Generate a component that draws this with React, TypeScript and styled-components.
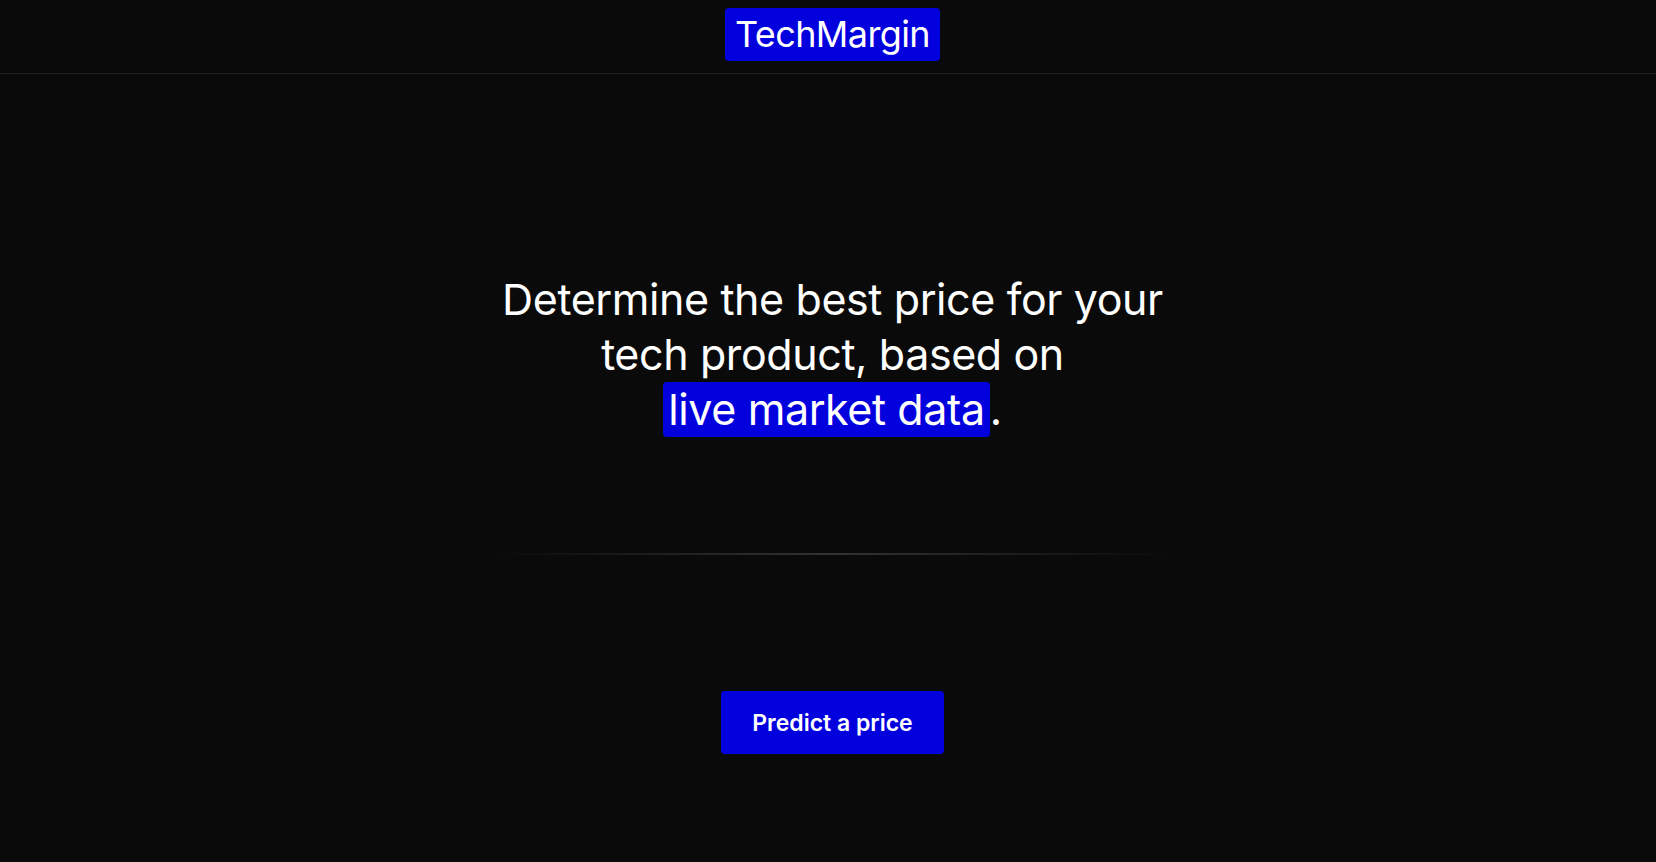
import styled, { createGlobalStyle } from 'styled-components';

const GlobalStyle = createGlobalStyle`
  * { box-sizing: border-box; }
  html, body {
    margin: 0;
    padding: 0;
    background: #0a0a0a;
    color: #ffffff;
    font-family: Inter, "Liberation Sans", sans-serif;
  }
`

const Page = styled.div`
  min-height: 862px;
  display: flex;
  flex-direction: column;
  background: #0a0a0a;
  padding-left: 9px;
`

const Header = styled.header`
  height: 74px;
  display: flex;
  justify-content: center;
  align-items: flex-start;
  padding-top: 8px;
  border-bottom: 1px solid #232323;
  margin-left: -9px;
  padding-left: 9px;
`

const Logo = styled.a`
  display: inline-block;
  background: #0300de;
  color: #ffffff;
  font-size: 36px;
  line-height: 53px;
  height: 53px;
  padding: 0 10px;
  border-radius: 4px;
  text-decoration: none;
  letter-spacing: -0.6px;
`

const Main = styled.main`
  display: flex;
  flex-direction: column;
  align-items: center;
  padding-top: 198px;
`

const Headline = styled.h1`
  margin: 0;
  font-weight: 400;
  font-size: 43px;
  line-height: 55px;
  text-align: center;
  max-width: 700px;
  letter-spacing: -0.4px;
`

const Highlight = styled.span`
  background: #0300de;
  border-radius: 4px;
  padding: 0 5px;
  display: inline-block;
  line-height: 55px;
`

const Divider = styled.div`
  width: 680px;
  height: 2px;
  margin-top: 116px;
  background: linear-gradient(90deg, rgba(60, 60, 60, 0) 0%, #333333 50%, rgba(60, 60, 60, 0) 100%);
`

const Button = styled.button`
  margin-top: 136px;
  width: 223px;
  height: 63px;
  border: none;
  border-radius: 4px;
  background: #0300de;
  color: #ffffff;
  font-family: Inter, "Liberation Sans", sans-serif;
  font-size: 23px;
  font-weight: 600;
  cursor: pointer;
`

const App = () => {
  return (
    <>
      <GlobalStyle />
      <Page>
        <Header>
          <Logo href="#">TechMargin</Logo>
        </Header>
        <Main>
          <Headline>
            Determine the best price for your tech product, based on <Highlight>live market data</Highlight>.
          </Headline>
          <Divider />
          <Button>Predict a price</Button>
        </Main>
      </Page>
    </>
  )
}

export default App;
